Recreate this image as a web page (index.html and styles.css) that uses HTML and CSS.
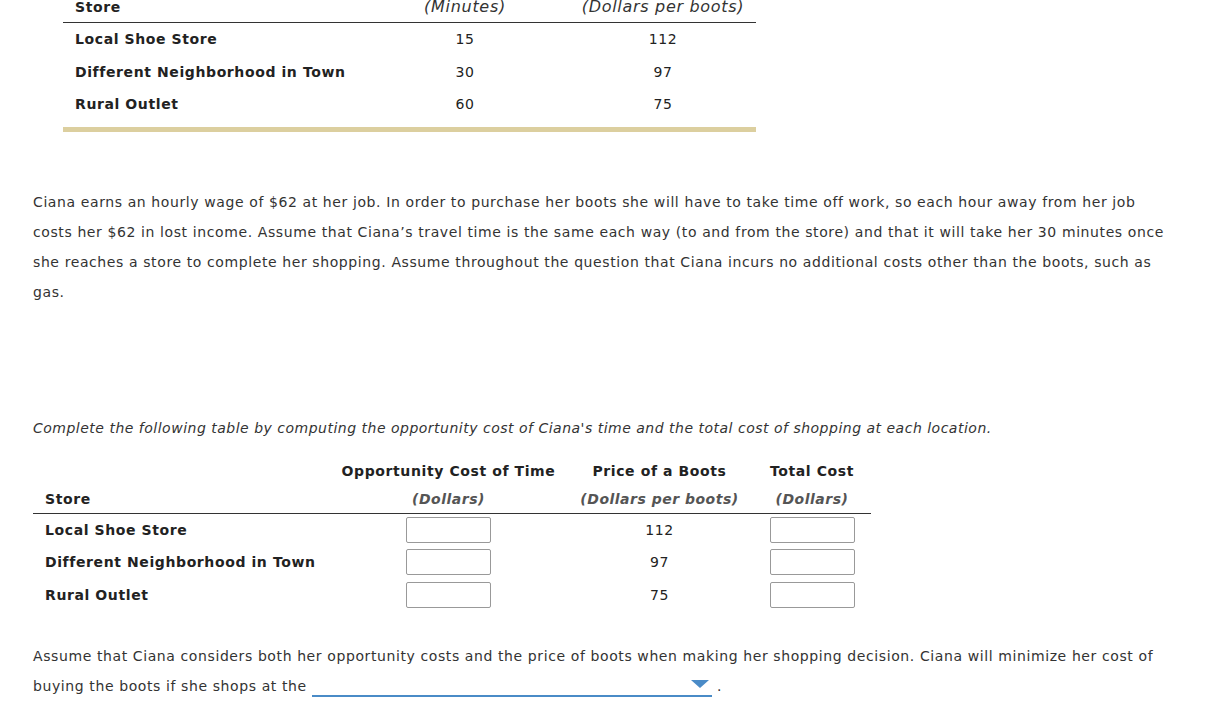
FILE: index.html
```html
<!DOCTYPE html>
<html>
<head>
<meta charset="utf-8">
<link rel="stylesheet" href="styles.css">
</head>
<body>
<div class="page">
  <div class="table1">
    <div class="t1-head t1-top">
      <div></div>
      <div class="c">Travel Time (One Way)</div>
      <div class="c c3">Price of Boots</div>
    </div>
    <div class="t1-head t1-sub">
      <div class="store">Store</div>
      <div class="c it">(Minutes)</div>
      <div class="c c3 it">(Dollars per boots)</div>
    </div>
    <div class="t1-row">
      <div class="store">Local Shoe Store</div>
      <div class="c">15</div>
      <div class="c c3">112</div>
    </div>
    <div class="t1-row">
      <div class="store">Different Neighborhood in Town</div>
      <div class="c">30</div>
      <div class="c c3">97</div>
    </div>
    <div class="t1-row">
      <div class="store">Rural Outlet</div>
      <div class="c">60</div>
      <div class="c c3">75</div>
    </div>
    <div class="tan"></div>
  </div>

  <p class="para">Ciana earns an hourly wage of $62 at her job. In order to purchase her boots she will have to take time off work, so each hour away from her job costs her $62 in lost income. Assume that Ciana’s travel time is the same each way (to and from the store) and that it will take her 30 minutes once she reaches a store to complete her shopping. Assume throughout the question that Ciana incurs no additional costs other than the boots, such as gas.</p>

  <p class="instr">Complete the following table by computing the opportunity cost of Ciana's time and the total cost of shopping at each location.</p>

  <div class="table2">
    <div class="t2-h1">
      <div></div>
      <div class="c">Opportunity Cost of Time</div>
      <div class="c">Price of a Boots</div>
      <div class="c">Total Cost</div>
    </div>
    <div class="t2-h2">
      <div class="store">Store</div>
      <div class="c it2">(Dollars)</div>
      <div class="c it2">(Dollars per boots)</div>
      <div class="c it2">(Dollars)</div>
    </div>
    <div class="t2-row">
      <div class="store">Local Shoe Store</div>
      <div class="c"><span class="box"></span></div>
      <div class="c">112</div>
      <div class="c"><span class="box"></span></div>
    </div>
    <div class="t2-row">
      <div class="store">Different Neighborhood in Town</div>
      <div class="c"><span class="box"></span></div>
      <div class="c">97</div>
      <div class="c"><span class="box"></span></div>
    </div>
    <div class="t2-row">
      <div class="store">Rural Outlet</div>
      <div class="c"><span class="box"></span></div>
      <div class="c">75</div>
      <div class="c"><span class="box"></span></div>
    </div>
  </div>

  <p class="para last">Assume that Ciana considers both her opportunity costs and the price of boots when making her shopping decision. Ciana will minimize her cost of buying the boots if she shops at the <span class="select"><svg class="arrow" width="18" height="9" viewBox="0 0 18 9"><path d="M0 0 L18 0 L9 8 Z" fill="#4a8bc7"/></svg></span> .</p>
</div>
</body>
</html>
```

FILE: styles.css
```css
html, body {
  margin: 0;
  padding: 0;
  background: #fff;
}
body {
  font-family: "DejaVu Sans", Verdana, sans-serif;
  font-size: 14px;
  color: #333;
  overflow: hidden;
  letter-spacing: 0.6px;
}
.page {
  padding: 0 33px;
  margin-top: -35px;
}
.c { text-align: center; }
.c3 { padding-left: 10px; }
.store { padding-left: 12px; }

/* top table */
.table1 {
  width: 693px;
  margin-left: 30px;
  color: #222;
}
.t1-head, .t1-row {
  display: grid;
  grid-template-columns: 307px 190px 196px;
  align-items: center;
}
.t1-head { font-weight: bold; letter-spacing: 0.6px; }
.t1-top { height: 28px; }
.t1-sub {
  height: 29px;
  border-bottom: 1px solid #333;
}
.t1-sub .store { padding-bottom: 2px; }
.t1-sub .it {
  font-style: italic;
  font-weight: normal;
  font-size: 16px;
  letter-spacing: 0.7px;
  color: #333;
  padding-bottom: 2px;
}
.t1-row { height: 32.5px; }
.t1-row .store { font-weight: bold; letter-spacing: 0.6px; }
.tan {
  margin-top: 6px;
  height: 5px;
  background: #dccf9f;
}

/* paragraphs */
.para {
  margin: 55px 0 0 0;
  line-height: 30px;
  color: #333;
}
.instr {
  margin: 106px 0 0 0;
  line-height: 30px;
  font-style: italic;
  letter-spacing: 0.5px;
  color: #333;
}

/* bottom table */
.table2 {
  width: 838px;
  margin-top: 14px;
  color: #222;
}
.t2-h1, .t2-h2, .t2-row {
  display: grid;
  grid-template-columns: 298px 235px 187px 118px;
  align-items: center;
}
.t2-h1 { height: 28px; font-weight: bold; letter-spacing: 0.6px; }
.t2-h2 {
  height: 28px;
  font-weight: bold;
  letter-spacing: 0.6px;
  border-bottom: 1px solid #333;
}
.t2-h2 .it2 { font-style: italic; color: #555; letter-spacing: 0.5px; }
.t2-h2 .store { color: #222; }
.t2-row { height: 32.5px; }
.t2-row .store { font-weight: bold; letter-spacing: 0.6px; }
.box {
  display: inline-block;
  vertical-align: middle;
  width: 83px;
  height: 24px;
  border: 1px solid #999;
  border-radius: 2px;
  background: #fff;
}
.last { margin-top: 30px; }
.select {
  display: inline-block;
  width: 400px;
  height: 20px;
  border-bottom: 2px solid #4a8bc7;
  vertical-align: -6px;
  position: relative;
}
.arrow {
  position: absolute;
  right: 3px;
  top: 5px;
}
```
